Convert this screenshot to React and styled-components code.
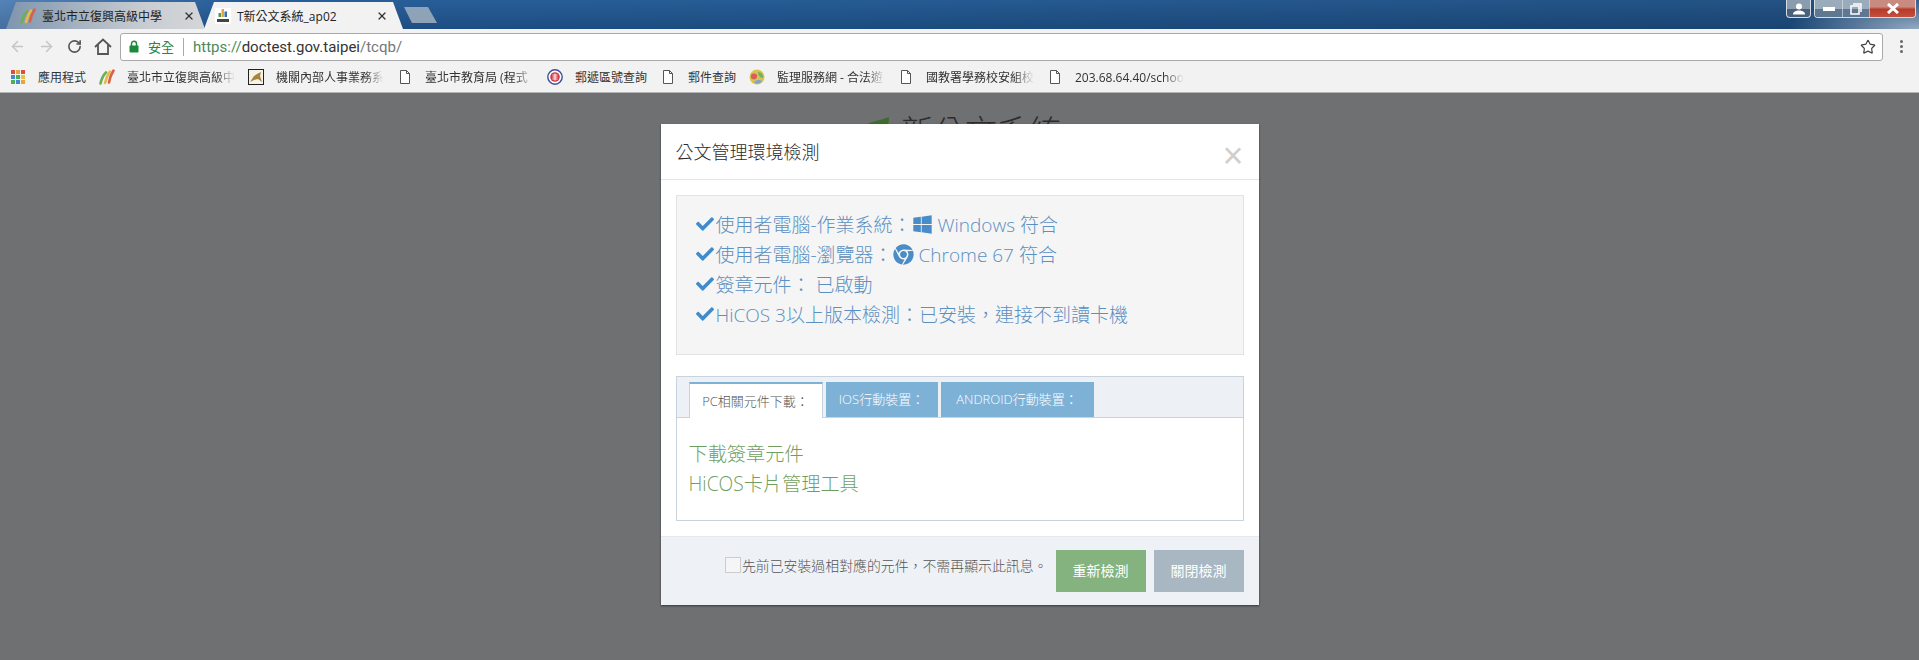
import styled, { createGlobalStyle } from 'styled-components';
import { ArrowLeft, ArrowRight, RotateCw, Star, X } from 'lucide-react';
import { FaCheck, FaWindows, FaChrome } from 'react-icons/fa';

const GlobalStyle = createGlobalStyle`
  html, body {
    margin: 0;
    height: 660px;
    overflow: hidden;
    font-family: "Open Sans", "Noto Sans CJK TC", sans-serif;
  }
  * { box-sizing: border-box; }
`;

const Swoosh = () => (
  <svg width="16" height="16" viewBox="0 0 16 16" fill="none" strokeWidth="2.6" strokeLinecap="round">
    <path d="M1.500 14.500C2.500 10 4 6.500 7 3.500" stroke="#6fae55" />
    <path d="M6 14C7 9.500 8.500 6 11 2.500" stroke="#e6bb45" />
    <path d="M10 13.500C10.800 9 12 5.500 14.500 1.500" stroke="#d9604a" />
  </svg>
);

const TcqbIcon = () => (
  <svg width="16" height="16" viewBox="0 0 16 16">
    <rect width="16" height="16" fill="#fff" />
    <rect x="6.500" y="1" width="2.500" height="8" fill="#e8a33d" />
    <rect x="3.500" y="5" width="2.500" height="4" fill="#4b9a4f" />
    <rect x="9.500" y="3.500" width="2.500" height="5.500" fill="#2f6fb5" />
    <rect x="2" y="11" width="12" height="3" fill="#444" />
  </svg>
);

const AppsIcon = () => {
  const colors = ['#d9503f', '#e8a33d', '#d9503f', '#4a86d8', '#4caf50', '#e8c23d', '#4caf50', '#4a86d8', '#e8a33d'];
  return (
    <svg width="16" height="16" viewBox="0 0 16 16">
      {colors.map((c, i) => (
        <rect key={i} x={1 + (i % 3) * 5} y={1 + Math.floor(i / 3) * 5} width="4" height="4" fill={c} />
      ))}
    </svg>
  );
};

const PictureIcon = () => (
  <svg width="16" height="16" viewBox="0 0 16 16">
    <rect x="0.500" y="0.500" width="15" height="15" fill="#f5f2e8" stroke="#222" />
    <path d="M2 13L6 7L9 5L13 3L12 7L14 13L10 10L6 11Z" fill="#a8823f" />
  </svg>
);

const DocIcon = () => (
  <svg width="12" height="16" viewBox="0 0 12 16" fill="#fff" stroke="#555" strokeWidth="1">
    <path d="M1.500 1.500H7.500L10.500 4.500V14.500H1.500Z" />
    <path d="M7.500 1.500V4.500H10.500" fill="none" />
  </svg>
);

const PostIcon = () => (
  <svg width="16" height="16" viewBox="0 0 16 16">
    <circle cx="8" cy="8" r="7.200" fill="#fff" stroke="#3d4f9a" strokeWidth="1.400" />
    <circle cx="8" cy="8" r="4.800" fill="#d23a4a" />
    <path d="M5.500 6H10.500M5.500 8H10.500M5.500 10H10.500M8 4.500V11.500" stroke="#fff" strokeWidth="0.900" />
  </svg>
);

const GlobeIcon = () => (
  <svg width="16" height="16" viewBox="0 0 16 16">
    <circle cx="8" cy="8" r="7.500" fill="#d9c24f" />
    <path d="M2 6C5 3 9 5 8 8C7 11 4 11 2 9Z" fill="#d9605a" />
    <path d="M9 3C12 3 15 6 14 9C12 9 9 7 9 3Z" fill="#6fb06a" />
    <path d="M5 13C8 10 12 11 13 12C11 15 7 16 5 13Z" fill="#7fa3d8" />
  </svg>
);

const LockIcon = () => (
  <svg width="10" height="13" viewBox="0 0 10 13">
    <path d="M2.500 6V3.800C2.500 2.300 3.600 1.200 5 1.200S7.500 2.300 7.500 3.800V6" fill="none" stroke="#1b8a3d" strokeWidth="1.500" />
    <rect x="0.500" y="5.500" width="9" height="7" rx="0.800" fill="#1b8a3d" />
  </svg>
);

const HomeIcon = () => (
  <svg width="18" height="17" viewBox="0 0 18 17" fill="none" stroke="#555" strokeWidth="1.800" strokeLinejoin="miter">
    <path d="M1 9L9 1.500L17 9" />
    <path d="M4 7V16H14V7" />
  </svg>
);

const bookmarks = [
  { icon: <AppsIcon />, label: '應用程式', width: 48 },
  { icon: <Swoosh />, label: '臺北市立復興高級中', width: 108, fade: true },
  { icon: <PictureIcon />, label: '機關內部人事業務系', width: 108, fade: true },
  { icon: <DocIcon />, label: '臺北市教育局 (程式', width: 109, fade: true, doc: true },
  { icon: <PostIcon />, label: '郵遞區號查詢', width: 72 },
  { icon: <DocIcon />, label: '郵件查詢', width: 48, doc: true },
  { icon: <GlobeIcon />, label: '監理服務網 - 合法遊', width: 108, fade: true },
  { icon: <DocIcon />, label: '國教署學務校安組校', width: 108, fade: true, doc: true },
  { icon: <DocIcon />, label: '203.68.64.40/schoo', width: 109, fade: true, doc: true },
];

export default function App() {
  return (
    <>
      <GlobalStyle />
      <TabStrip>
        <BrowserTab>
          <Swoosh />
          <TabTitle>臺北市立復興高級中學</TabTitle>
          <X size={12} color="#333" strokeWidth={2.6} />
        </BrowserTab>
        <BrowserTab $active>
          <TcqbIcon />
          <TabTitle>T新公文系統_ap02</TabTitle>
          <X size={12} color="#333" strokeWidth={2.6} />
        </BrowserTab>
        <NewTab />
        <WindowControls>
          <UserButton>
            <svg width="14" height="12" viewBox="0 0 14 12" fill="#fff">
              <circle cx="7" cy="3.500" r="3" />
              <path d="M1 11.500C1 8.500 4 7.500 7 7.500S13 8.500 13 11.500Z" />
            </svg>
          </UserButton>
          <ButtonGroup>
            <WinButton>
              <svg width="12" height="4" viewBox="0 0 12 4"><rect width="12" height="4" fill="#fff" /></svg>
            </WinButton>
            <WinButton>
              <svg width="12" height="12" viewBox="0 0 12 12" fill="none" stroke="#fff" strokeWidth="1.500">
                <rect x="1" y="3" width="8" height="8" />
                <path d="M3 1H11V9" />
              </svg>
            </WinButton>
            <WinButton $close>
              <svg width="12" height="11" viewBox="0 0 12 11" stroke="#fff" strokeWidth="3">
                <path d="M1 1L11 10M11 1L1 10" />
              </svg>
            </WinButton>
          </ButtonGroup>
        </WindowControls>
      </TabStrip>

      <Toolbar>
        <NavButtons>
          <ArrowLeft size={17} color="#c6c6c6" strokeWidth={2.2} />
          <ArrowRight size={17} color="#c6c6c6" strokeWidth={2.2} />
          <RotateCw size={15} color="#555" strokeWidth={2.6} />
          <HomeIcon />
        </NavButtons>
        <AddressBar>
          <LockIcon />
          <Secure>安全</Secure>
          <Divider />
          <Url>
            <UrlScheme>https://</UrlScheme>doctest.gov.taipei<UrlPath>/tcqb/</UrlPath>
          </Url>
          <Star size={16} color="#444" strokeWidth={1.8} />
        </AddressBar>
        <MenuDots>
          <i /><i /><i />
        </MenuDots>
      </Toolbar>

      <BookmarkBar>
        {bookmarks.map((b) => (
          <Bookmark key={b.label} $doc={b.doc}>
            {b.icon}
            <BookmarkLabel $width={b.width} $fade={b.fade}>{b.label}</BookmarkLabel>
          </Bookmark>
        ))}
      </BookmarkBar>

      <Page>
        <PageTitle>
          <svg width="25" height="26" viewBox="0 0 25 26">
            <path d="M1 9C6 5 14 5 24 1C24 15 16 24 1 24Z" fill="#3f6b2c" />
          </svg>
          新公文系統
        </PageTitle>

        <Overlay>
          <Modal>
            <ModalHeader>
              <ModalTitle>公文管理環境檢測</ModalTitle>
              <CloseX>×</CloseX>
            </ModalHeader>

            <ModalBody>
              <CheckWell>
                <CheckLine><FaCheck />使用者電腦-作業系統：<BrandIcon><FaWindows /></BrandIcon> Windows 符合</CheckLine>
                <CheckLine><FaCheck />使用者電腦-瀏覽器：<BrandIcon><FaChrome /></BrandIcon> Chrome 67 符合</CheckLine>
                <CheckLine><FaCheck />簽章元件： 已啟動</CheckLine>
                <CheckLine><FaCheck />HiCOS 3以上版本檢測：已安裝，連接不到讀卡機</CheckLine>
              </CheckWell>

              <TabPanel>
                <TabHead>
                  <PanelTab $active $width={134}>PC相關元件下載：</PanelTab>
                  <PanelTab $width={112}>IOS行動裝置：</PanelTab>
                  <PanelTab $width={153}>ANDROID行動裝置：</PanelTab>
                </TabHead>
                <TabContent>
                  <DownloadLink>下載簽章元件</DownloadLink>
                  <DownloadLink>HiCOS卡片管理工具</DownloadLink>
                </TabContent>
              </TabPanel>
            </ModalBody>

            <ModalFooter>
              <SkipLabel>
                <FakeCheckbox />
                先前已安裝過相對應的元件，不需再顯示此訊息。
              </SkipLabel>
              <FooterButton $color="#84b37f">重新檢測</FooterButton>
              <FooterButton $color="#a9b7c2">關閉檢測</FooterButton>
            </ModalFooter>
          </Modal>
        </Overlay>
      </Page>
    </>
  );
}

const TabStrip = styled.div`
  display: flex;
  align-items: flex-end;
  height: 29px;
  padding-left: 6px;
  background:
    radial-gradient(ellipse 130px 34px at 100% 100%, rgba(190, 205, 220, 0.75), transparent),
    linear-gradient(180deg, rgba(255, 255, 255, 0.03), rgba(0, 0, 0, 0.12)),
    linear-gradient(90deg, #4f7fb5 0%, #225a96 12%, #1f5690 45%, #1c4b7e 100%);
`;
const BrowserTab = styled.div`
  display: flex;
  align-items: center;
  width: 199px;
  height: 27px;
  margin-right: -1px;
  padding: ${(props) => (props.$active ? '0 15px 0 11px' : '0 10px 0 14px')};
  clip-path: polygon(0 100%, 10px 0, calc(100% - 10px) 0, 100% 100%);
  background: ${(props) => (props.$active ? '#f2f2f2' : 'linear-gradient(90deg, #7f95ae, #c9cdd2 70%, #d4d6d8)')};
`;
const TabTitle = styled.span`
  flex: 1;
  margin-left: 6px;
  font-size: 12px;
  color: #222;
  white-space: nowrap;
`;
const NewTab = styled.div`
  width: 33px;
  height: 16px;
  margin: 0 0 6px 2px;
  clip-path: polygon(0 0, 24px 0, 100% 100%, 8px 100%);
  background: #8fa3b8;
`;
const WindowControls = styled.div`
  display: flex;
  align-self: flex-start;
  margin-left: auto;
  margin-right: 3px;
  gap: 3px;
`;
const UserButton = styled.div`
  display: flex;
  align-items: center;
  justify-content: center;
  width: 25px;
  height: 18px;
  border: 1px solid #d5dde5;
  border-top: 0;
  border-radius: 0 0 4px 4px;
  background: linear-gradient(180deg, #8b9cae 50%, #4a617c 51%);
`;
const ButtonGroup = styled.div`
  display: flex;
  height: 18px;
  border: 1px solid #d5dde5;
  border-top: 0;
  border-radius: 0 0 4px 4px;
  overflow: hidden;
`;
const WinButton = styled.div`
  display: flex;
  align-items: center;
  justify-content: center;
  width: ${(props) => (props.$close ? '46px' : '27px')};
  border-left: 1px solid rgba(225, 232, 240, 0.6);
  &:first-child { border-left: 0; }
  background: ${(props) =>
    props.$close
      ? 'linear-gradient(180deg, #c98a80 40%, #b83a2a 55%, #c4503c)'
      : 'linear-gradient(180deg, #9aabbc 50%, #5f7791 51%)'};
`;

const Toolbar = styled.div`
  display: flex;
  align-items: center;
  height: 33px;
  background: #f2f2f2;
  padding: 2px 0 0 9px;
`;
const NavButtons = styled.div`
  display: flex;
  align-items: center;
  width: 111px;
  gap: 12px;
`;
const AddressBar = styled.div`
  display: flex;
  align-items: center;
  width: 1763px;
  height: 28px;
  padding: 0 6px 0 8px;
  background: #fff;
  border: 1px solid #a9a9a9;
  border-radius: 3px;
`;
const Secure = styled.span`
  margin-left: 9px;
  font-size: 13px;
  color: #2a8547;
`;
const Divider = styled.span`
  width: 1px;
  height: 18px;
  margin: 0 9px;
  background: #aaa;
`;
const Url = styled.span`
  flex: 1;
  font-size: 15px;
  font-family: "Roboto", sans-serif;
  color: #333;
`;
const UrlScheme = styled.span`
  color: #4a8a5a;
`;
const UrlPath = styled.span`
  color: #777;
`;
const MenuDots = styled.div`
  display: flex;
  flex-direction: column;
  gap: 2px;
  margin-left: 17px;
  i {
    width: 3px;
    height: 3px;
    border-radius: 50%;
    background: #666;
  }
`;

const BookmarkBar = styled.div`
  display: flex;
  align-items: center;
  gap: 13px;
  height: 31px;
  padding-left: 10px;
  background: #f2f2f2;
  border-bottom: 1px solid #b5b5b5;
`;
const Bookmark = styled.div`
  display: flex;
  align-items: center;
  gap: ${(props) => (props.$doc ? '14px' : '12px')};
  margin-left: ${(props) => (props.$doc ? '2px' : '0')};
`;
const BookmarkLabel = styled.span`
  width: ${(props) => props.$width}px;
  white-space: nowrap;
  font-size: 12px;
  color: #333;
  ${(props) =>
    props.$fade && 'mask-image: linear-gradient(90deg, #000 82%, transparent 100%);'}
`;

const Page = styled.div`
  position: relative;
  height: 567px;
  padding-top: 16px;
  background: #6f7072;
  overflow: hidden;
`;
const PageTitle = styled.div`
  display: flex;
  justify-content: center;
  align-items: center;
  gap: 11px;
  margin-left: 7px;
  font-size: 32px;
  font-weight: 300;
  line-height: 44px;
  color: #2c2c2d;
  svg { margin-top: -4px; }
`;
const Overlay = styled.div`
  position: absolute;
  top: 31px;
  left: 0;
  right: 0;
  display: flex;
  justify-content: center;
`;
const Modal = styled.div`
  width: 598px;
  height: 481px;
  display: flex;
  flex-direction: column;
  background: #fff;
  box-shadow: 0 1px 2px rgba(0, 0, 0, 0.5);
`;
const ModalHeader = styled.div`
  display: flex;
  justify-content: space-between;
  height: 56px;
  padding: 15px 15px 0 15px;
  border-bottom: 1px solid #e5e5e5;
`;
const ModalTitle = styled.div`
  font-size: 18px;
  line-height: 26px;
  font-weight: 300;
  color: #2b2b2b;
`;
const CloseX = styled.div`
  font-family: "Liberation Sans", sans-serif;
  font-size: 36px;
  line-height: 34px;
  color: #cfcfcf;
`;
const ModalBody = styled.div`
  flex: 1;
  display: flex;
  flex-direction: column;
  gap: 21px;
  padding: 15px 15px 0;
`;
const CheckWell = styled.div`
  height: 160px;
  padding: 13px 19px;
  background: #f5f5f5;
  border: 1px solid #e3e3e3;
`;
const CheckLine = styled.div`
  display: flex;
  align-items: center;
  height: 30px;
  font-size: 19px;
  font-weight: 300;
  color: #5b90c2;
  white-space: pre;
  > svg {
    width: 18px;
    height: 18px;
    margin-right: 2px;
    color: #428bca;
  }
`;
const BrandIcon = styled.span`
  display: inline-flex;
  font-size: 21px;
  color: #4a8cc7;
`;
const TabPanel = styled.div`
  height: 145px;
  display: flex;
  flex-direction: column;
  border: 1px solid #c9d3de;
`;
const TabHead = styled.div`
  display: flex;
  align-items: flex-end;
  gap: 3px;
  height: 41px;
  padding-left: 12px;
  background: #edf1f6;
  border-bottom: 1px solid #c9d3de;
`;
const PanelTab = styled.div`
  width: ${(props) => props.$width}px;
  height: ${(props) => (props.$active ? '36px' : '35px')};
  margin-bottom: ${(props) => (props.$active ? '-1px' : '0')};
  line-height: 34px;
  text-align: center;
  font-size: 13px;
  font-weight: 300;
  color: ${(props) => (props.$active ? '#555' : '#fff')};
  background: ${(props) => (props.$active ? '#fff' : '#7eb1d6')};
  ${(props) =>
    props.$active &&
    'border: 1px solid #c9d3de; border-bottom: 0; border-top: 2px solid #7eb1d6;'}
`;
const TabContent = styled.div`
  flex: 1;
  padding: 21px 12px 0;
`;
const DownloadLink = styled.div`
  height: 30px;
  line-height: 30px;
  font-size: 19.200px;
  font-weight: 300;
  color: #6f9f60;
`;
const ModalFooter = styled.div`
  display: flex;
  align-items: center;
  justify-content: flex-end;
  gap: 8px;
  height: 69px;
  padding: 0 15px 0 0;
  background: #eef2f7;
  border-top: 1px solid #e5e8ec;
`;
const SkipLabel = styled.label`
  display: flex;
  align-items: center;
  margin: -13px 0 0;
  font-size: 13.900px;
  font-weight: 300;
  color: #555;
`;
const FakeCheckbox = styled.span`
  width: 16px;
  height: 16px;
  margin-right: 1px;
  background: #f5f5f5;
  border: 1px solid #ccc;
`;
const FooterButton = styled.div`
  width: 90px;
  height: 42px;
  line-height: 42px;
  text-align: center;
  font-size: 14px;
  color: #fff;
  background: ${(props) => props.$color};
`;
